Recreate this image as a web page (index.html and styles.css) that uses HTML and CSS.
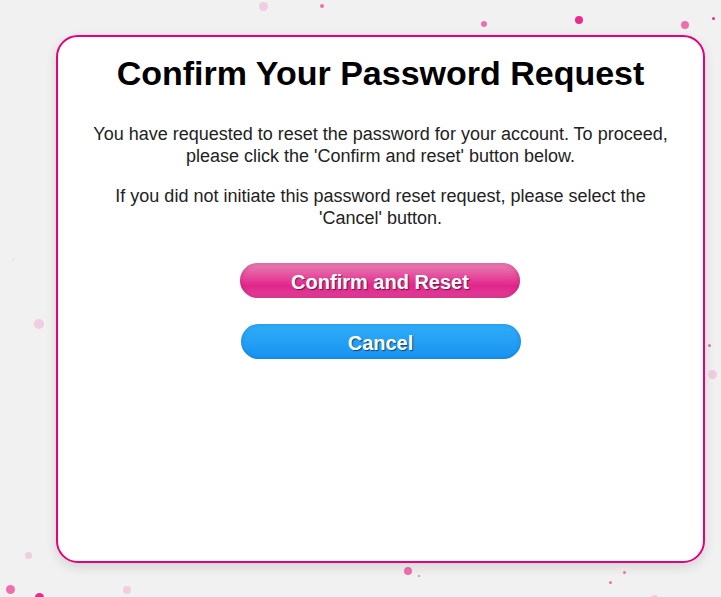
FILE: index.html
```
<!DOCTYPE html>
<html>
<head>
<meta charset="utf-8">
<link rel="stylesheet" href="styles.css">
</head>
<body>
<div class="dots" aria-hidden="true">
  <span class="dot pale" style="left:259px;top:2px;width:9px;height:9px"></span>
  <span class="dot mid" style="left:320px;top:4px;width:4px;height:4px"></span>
  <span class="dot mid" style="left:481px;top:21px;width:6px;height:6px"></span>
  <span class="dot hot" style="left:575px;top:16px;width:8px;height:8px"></span>
  <span class="dot mid" style="left:681px;top:21px;width:8px;height:8px"></span>
  <span class="dot hot" style="left:712px;top:17px;width:3px;height:3px"></span>
  <span class="dot faint" style="left:12px;top:258px;width:3px;height:3px"></span>
  <span class="dot pale" style="left:34px;top:319px;width:10px;height:10px"></span>
  <span class="dot mid" style="left:708px;top:344px;width:3px;height:3px"></span>
  <span class="dot pale" style="left:708px;top:370px;width:9px;height:9px"></span>
  <span class="dot pale" style="left:25px;top:552px;width:7px;height:7px"></span>
  <span class="dot mid" style="left:6px;top:585px;width:9px;height:9px"></span>
  <span class="dot hot" style="left:35px;top:593px;width:9px;height:9px"></span>
  <span class="dot pale" style="left:123px;top:586px;width:8px;height:8px"></span>
  <span class="dot mid" style="left:404px;top:567px;width:8px;height:8px"></span>
  <span class="dot mid" style="left:418px;top:575px;width:2px;height:2px"></span>
  <span class="dot mid" style="left:623px;top:571px;width:3px;height:3px"></span>
  <span class="dot mid" style="left:609px;top:581px;width:3px;height:3px"></span>
  <span class="dot pale" style="left:650px;top:595px;width:9px;height:9px"></span>
</div>
<main class="page">
  <section class="card">
    <h1 class="title">Confirm Your Password Request</h1>
    <p class="text">You have requested to reset the password for your account. To proceed, please click the 'Confirm and reset' button below.</p>
    <p class="text">If you did not initiate this password reset request, please select the 'Cancel' button.</p>
    <div class="actions">
      <button class="btn btn-confirm">Confirm and Reset</button>
      <button class="btn btn-cancel">Cancel</button>
    </div>
  </section>
</main>
</body>
</html>
```
FILE: styles.css
```
html, body {
  margin: 0;
  padding: 0;
  height: 100%;
}
body {
  background: #f1f1f1;
  font-family: "Liberation Sans", Arial, sans-serif;
  overflow: hidden;
  position: relative;
}
.dots {
  position: absolute;
  inset: 0;
  pointer-events: none;
}
.dot {
  position: absolute;
  border-radius: 50%;
}
.dot.hot { background: #ea2a8c; }
.dot.mid { background: #ee6fae; }
.dot.pale { background: #f0cde0; }
.dot.faint { background: #ece4e8; }
.page {
  position: relative;
  padding: 35px 0 0 56px;
}
.card {
  box-sizing: border-box;
  width: 649px;
  height: 528px;
  background: #fff;
  border: 2px solid #e6007e;
  border-radius: 22px;
  box-shadow: 0 4px 12px rgba(0, 0, 0, 0.12);
  padding: 17px 33px;
  text-align: center;
}
.title {
  margin: 0 0 31px;
  font-size: 34px;
  line-height: 38px;
  font-weight: bold;
  color: #000;
}
.text {
  margin: 0 0 18px;
  font-size: 18px;
  line-height: 22px;
  color: #222;
}
.actions {
  display: flex;
  flex-direction: column;
  align-items: center;
  gap: 26px;
  margin-top: 34px;
}
.btn {
  width: 280px;
  height: 35px;
  border: none;
  border-radius: 18px;
  font-family: "Liberation Sans", Arial, sans-serif;
  font-size: 20px;
  font-weight: bold;
  color: #fff;
  text-shadow: 1px 1px 1px rgba(0, 0, 0, 0.55);
  padding: 3px 0 0;
}
.btn-confirm {
  margin-left: -1px;
  background: linear-gradient(#e982b6, #e2268b 65%, #e0419a);
  box-shadow: inset 0 0 5px rgba(150, 0, 70, 0.35);
}
.btn-cancel {
  background: linear-gradient(#30adf9, #1892f1);
  box-shadow: inset 0 0 4px rgba(0, 60, 120, 0.25);
}
```
